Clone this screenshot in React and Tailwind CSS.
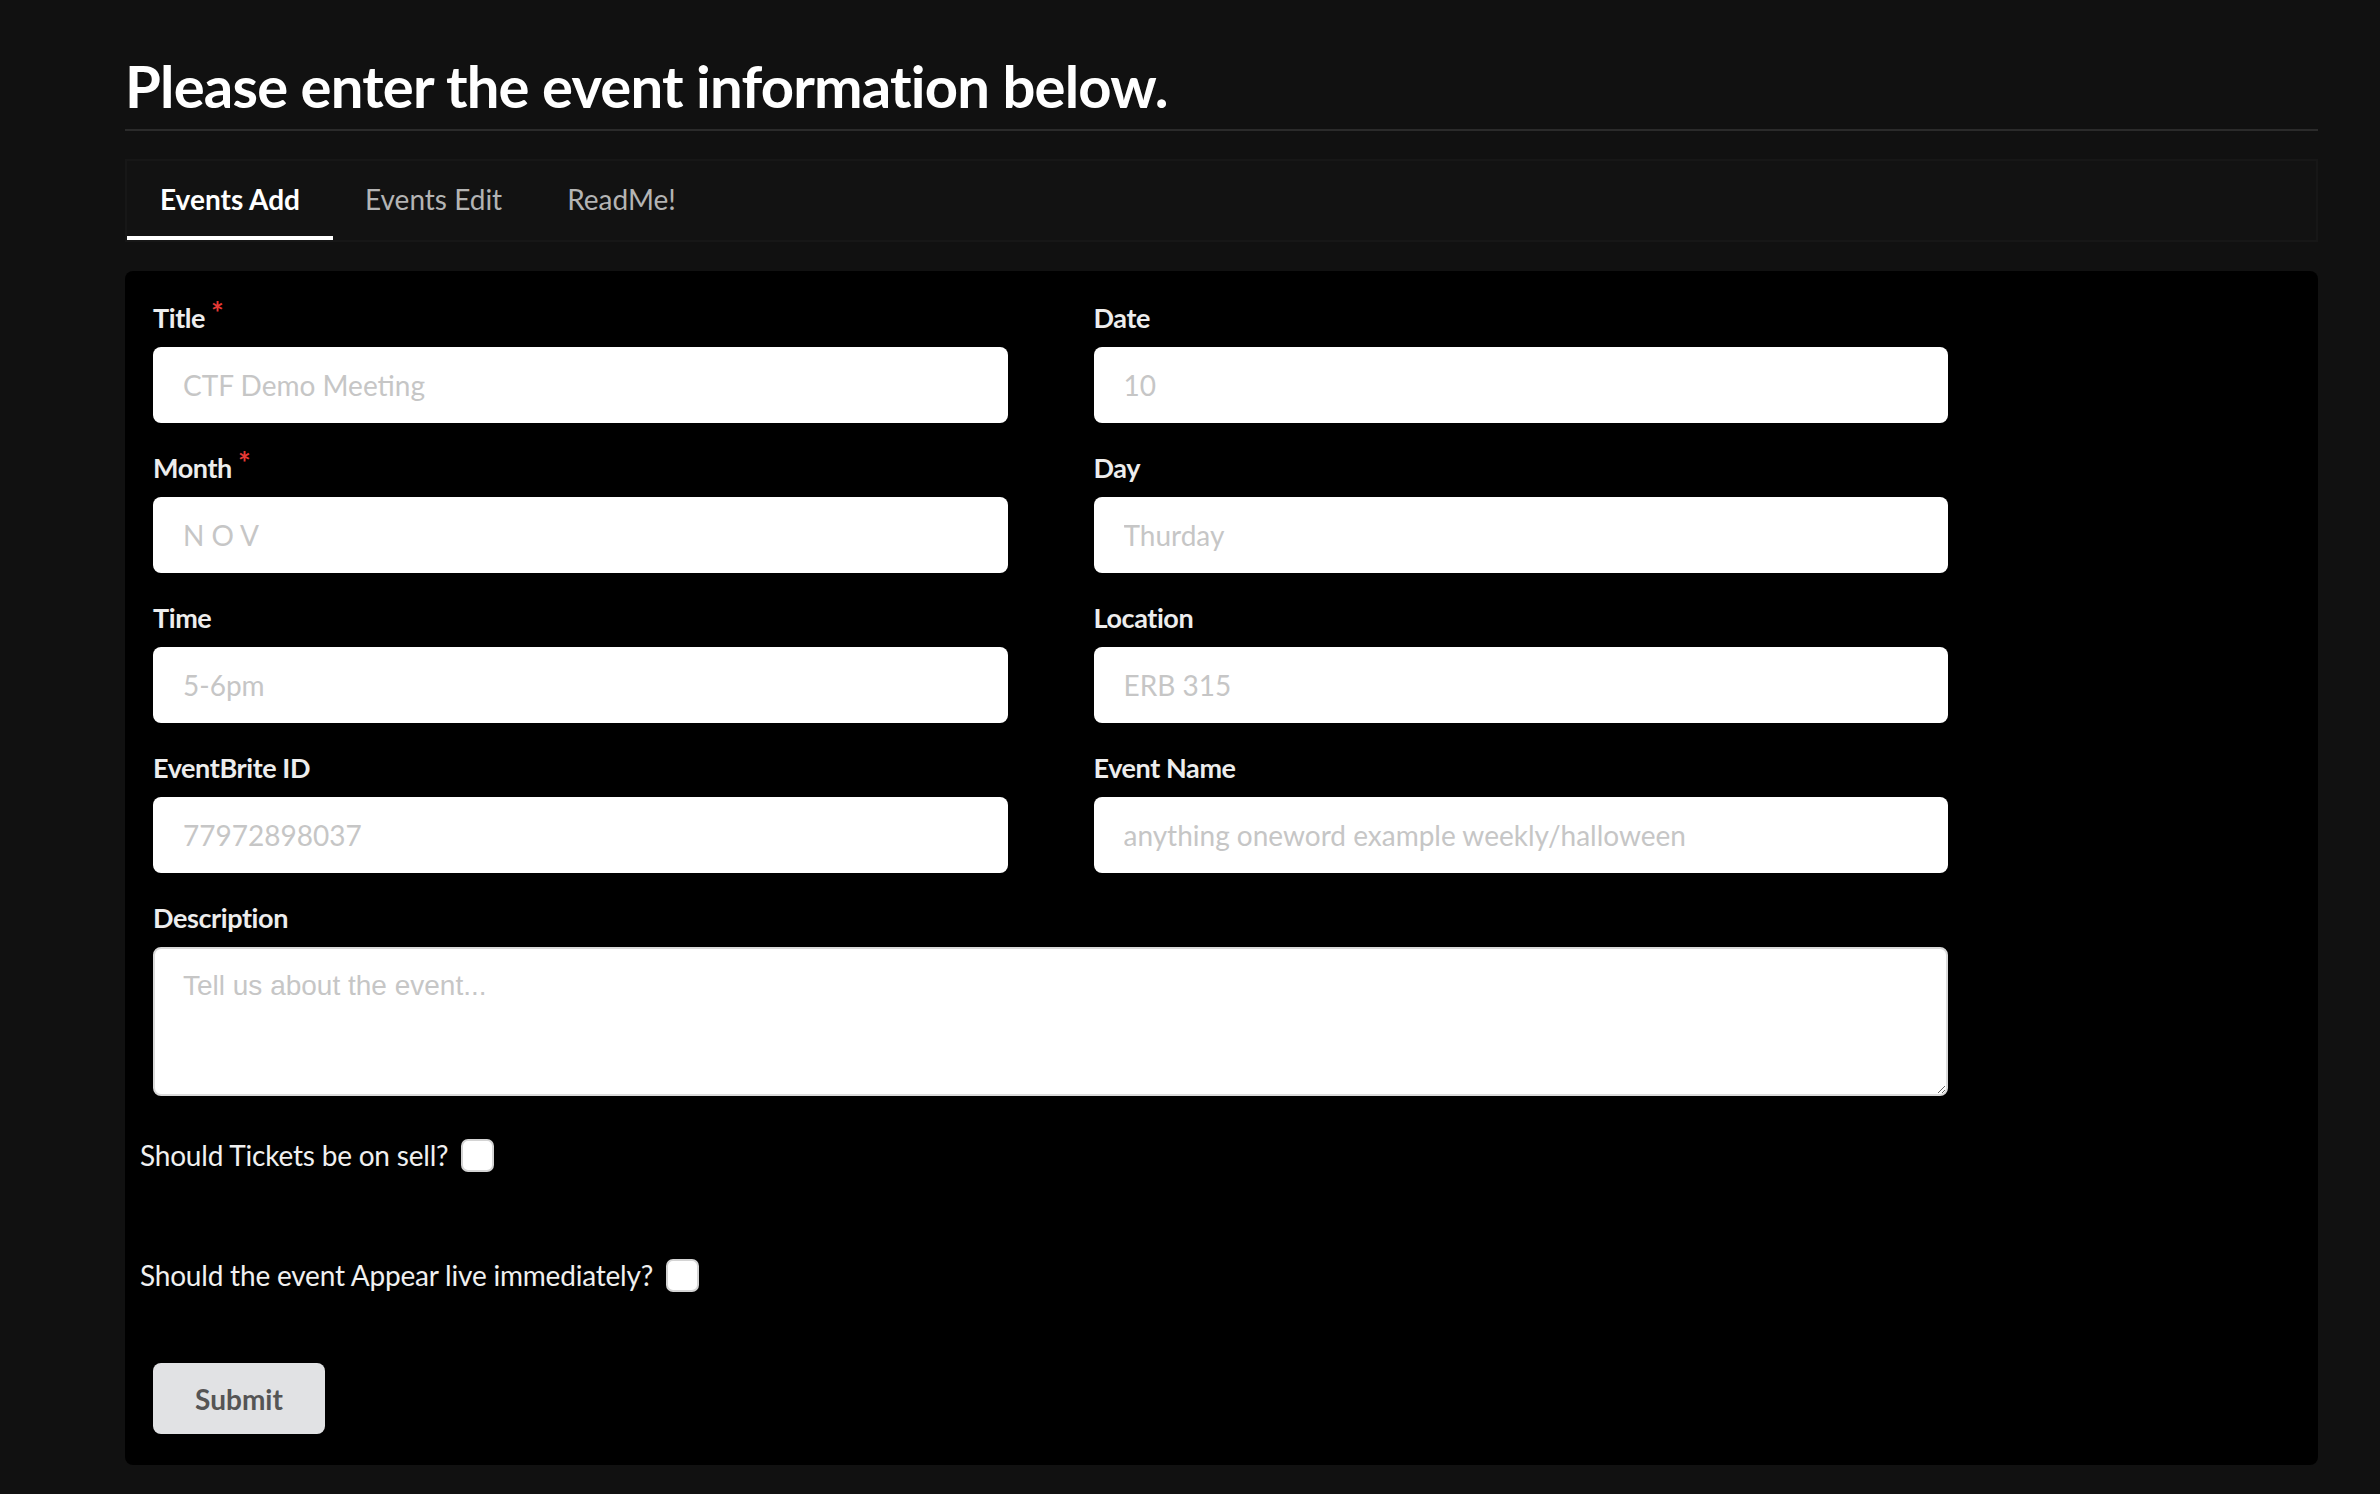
import React from 'react';

const fields = [
  { label: 'Title', placeholder: 'CTF Demo Meeting', required: true },
  { label: 'Date', placeholder: '10' },
  { label: 'Month', placeholder: 'N O V', required: true },
  { label: 'Day', placeholder: 'Thurday' },
  { label: 'Time', placeholder: '5-6pm' },
  { label: 'Location', placeholder: 'ERB 315' },
  { label: 'EventBrite ID', placeholder: '77972898037' },
  { label: 'Event Name', placeholder: 'anything oneword example weekly/halloween' },
];

function Field({ label, placeholder, required }) {
  return (
    <div className="flex flex-col">
      <label className="text-[27px] tracking-[-0.4px] leading-[34px] font-bold text-[#ededed] mb-[12px] flex items-start">
        {label}
        {required && <span className="text-[#e53935] text-[30px] leading-[30px] ml-[6px] -mt-[4px]">*</span>}
      </label>
      <input
        type="text"
        placeholder={placeholder}
        className="h-[76px] w-full rounded-lg bg-white px-[30px] text-[28px] text-[#333] placeholder:text-[#c6c6c6] outline-none"
      />
    </div>
  );
}

export default function App() {
  return (
    <div className="min-h-screen bg-[#111111] font-['Lato',sans-serif] antialiased">
      <div className="ml-[125px] w-[2193px] pt-[57px]">
        <h1 className="text-[58px] tracking-[-0.8px] leading-[58px] font-bold text-white pb-[14px] border-b-2 border-[#2b2b2b]">
          Please enter the event information below.
        </h1>

        {/* tabs */}
        <div className="mt-[28px] h-[83px] border-2 border-[#171717] bg-[#121212] flex">
          <button className="h-full px-[33px] border-b-[4px] border-white text-[28px] font-bold text-white">Events Add</button>
          <button className="h-full px-[32px] border-b-[4px] border-transparent text-[28px] text-[#b4b4b4]">Events Edit</button>
          <button className="h-full px-[33px] border-b-[4px] border-transparent text-[28px] text-[#b4b4b4]">ReadMe!</button>
        </div>

        {/* form card */}
        <div className="mt-[29px] bg-black rounded-lg pt-[30px] pb-[31px] px-[15px]">
          <div className="pl-[13px] w-[1808px]">
            <div className="grid grid-cols-2 gap-x-[86px] gap-y-[28px]">
              {fields.map((f) => (
                <Field key={f.label} {...f} />
              ))}
            </div>
            <div className="mt-[28px] flex flex-col">
              <label className="text-[27px] tracking-[-0.4px] leading-[34px] font-bold text-[#ededed] mb-[12px]">Description</label>
              <textarea
                placeholder="Tell us about the event..."
                className="h-[149px] w-full rounded-lg bg-white border-2 border-[#dadada] px-[28px] pt-[20px] text-[28px] leading-[34px] font-['Liberation_Sans',Arial,sans-serif] placeholder:text-[#c6c6c6] outline-none"
              />
            </div>
          </div>

          <div className="mt-[42px] flex items-center gap-[13px] text-[28px] tracking-[-0.2px] leading-[34px] text-[#f0f0f0]">
            <span>Should Tickets be on sell?</span>
            <input type="checkbox" className="appearance-none w-[33px] h-[33px] bg-white rounded-[7px] border-2 border-[#d4d4d4]" />
          </div>

          <div className="mt-[86px] flex items-center gap-[13px] text-[28px] tracking-[-0.2px] leading-[34px] text-[#f0f0f0]">
            <span>Should the event Appear live immediately?</span>
            <input type="checkbox" className="appearance-none w-[33px] h-[33px] bg-white rounded-[7px] border-2 border-[#d4d4d4]" />
          </div>

          <button className="mt-[71px] ml-[13px] w-[172px] h-[71px] rounded-lg bg-[#e1e2e4] text-[28px] font-bold text-[#555555]">
            Submit
          </button>
        </div>
      </div>
    </div>
  );
}
